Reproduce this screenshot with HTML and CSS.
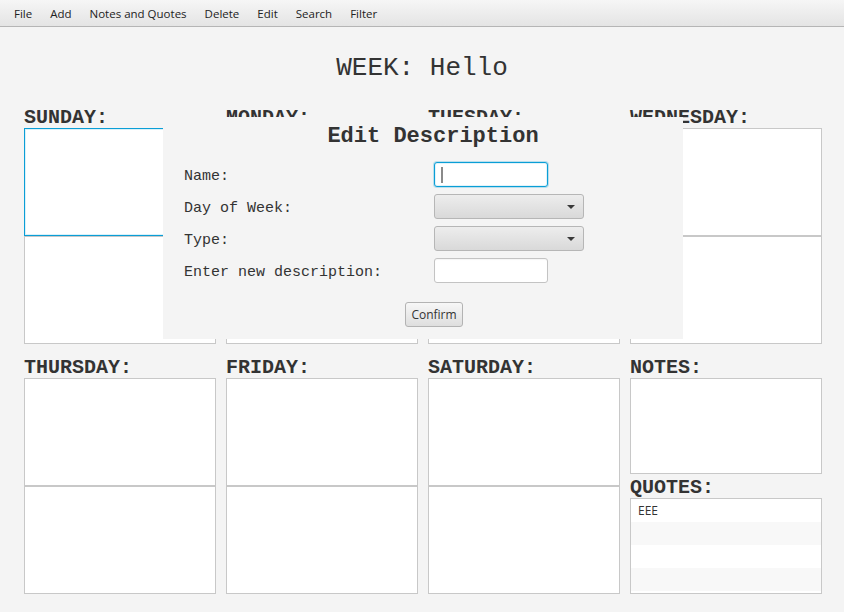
FILE: index.html
```html
<!DOCTYPE html>
<html>
<head>
<meta charset="utf-8">
<title>Week</title>
<link rel="stylesheet" href="styles.css">
</head>
<body>
<nav class="menubar">
  <span class="menu-item">File</span>
  <span class="menu-item">Add</span>
  <span class="menu-item">Notes and Quotes</span>
  <span class="menu-item">Delete</span>
  <span class="menu-item">Edit</span>
  <span class="menu-item">Search</span>
  <span class="menu-item">Filter</span>
</nav>
<h1 class="title">WEEK: Hello</h1>
<main class="week">
  <section class="day">
    <h2 class="day-label">SUNDAY:</h2>
    <div class="slot focused"></div>
    <div class="slot"></div>
  </section>
  <section class="day">
    <h2 class="day-label">MONDAY:</h2>
    <div class="slot"></div>
    <div class="slot"></div>
  </section>
  <section class="day">
    <h2 class="day-label">TUESDAY:</h2>
    <div class="slot"></div>
    <div class="slot"></div>
  </section>
  <section class="day">
    <h2 class="day-label">WEDNESDAY:</h2>
    <div class="slot"></div>
    <div class="slot"></div>
  </section>
  <section class="day">
    <h2 class="day-label">THURSDAY:</h2>
    <div class="slot"></div>
    <div class="slot"></div>
  </section>
  <section class="day">
    <h2 class="day-label">FRIDAY:</h2>
    <div class="slot"></div>
    <div class="slot"></div>
  </section>
  <section class="day">
    <h2 class="day-label">SATURDAY:</h2>
    <div class="slot"></div>
    <div class="slot"></div>
  </section>
  <section class="day">
    <h2 class="day-label">NOTES:</h2>
    <div class="notes-box"></div>
    <h2 class="day-label">QUOTES:</h2>
    <ul class="quotes">
      <li>EEE</li>
      <li></li>
      <li></li>
      <li></li>
    </ul>
  </section>
</main>

<div class="dialog">
  <h3 class="dialog-title">Edit Description</h3>
  <div class="form">
    <label class="form-label">Name:</label>
    <div class="field focused-field"><span class="caret"></span></div>
    <label class="form-label">Day of Week:</label>
    <div class="combo"><span class="arrow"></span></div>
    <label class="form-label">Type:</label>
    <div class="combo"><span class="arrow"></span></div>
    <label class="form-label">Enter new description:</label>
    <div class="field"></div>
  </div>
  <div class="actions">
    <button class="btn">Confirm</button>
  </div>
</div>
</body>
</html>
```

FILE: styles.css
```css
html, body {
  margin: 0;
  padding: 0;
}

body {
  width: 844px;
  height: 612px;
  position: relative;
  overflow: hidden;
  background: #f4f4f4;
  color: #333333;
  font-family: "Open Sans", "Noto Sans", sans-serif;
}

.menubar {
  height: 26px;
  border-bottom: 1px solid #b5b5b5;
  background: linear-gradient(#f6f6f6, #e4e4e4);
  display: flex;
  align-items: center;
  padding-left: 5px;
  font-size: 11.5px;
  color: #222;
}

.menu-item {
  padding: 0 9px;
}

.title {
  margin: 26px 0 21px;
  font: 400 26px/30px "Liberation Mono", monospace;
  text-align: center;
  color: #333;
}

.week {
  display: grid;
  grid-template-columns: repeat(4, 192px);
  column-gap: 10px;
  row-gap: 10px;
  padding-left: 24px;
}

.day {
  display: flex;
  flex-direction: column;
}

.day-label {
  margin: 0;
  height: 24px;
  font: 700 20px/27px "Liberation Mono", monospace;
  color: #333;
}

.slot {
  height: 106px;
  border: 1px solid #c8c8c8;
  background: #fff;
}

.slot.focused {
  border-color: #0a9ed6;
  box-shadow: inset 0 0 0 1px rgba(10, 158, 214, 0.15);
}

.notes-box {
  height: 94px;
  border: 1px solid #c8c8c8;
  background: #fff;
}

.quotes {
  list-style: none;
  margin: 0;
  padding: 0;
  height: 94px;
  border: 1px solid #c8c8c8;
  background: #fff;
  overflow: hidden;
}

.quotes li {
  height: 23px;
  line-height: 23px;
  padding-left: 7px;
  font-size: 12px;
  color: #333;
}

.quotes li:nth-child(even) {
  background: #f8f8f8;
}

/* dialog overlay */
.dialog {
  position: absolute;
  left: 163px;
  top: 117px;
  width: 520px;
  height: 222px;
  box-sizing: border-box;
  padding-top: 5px;
  background: #f4f4f4;
}

.dialog-title {
  margin: 0;
  padding-left: 20px;
  text-align: center;
  font: 700 22px/30px "Liberation Mono", monospace;
  color: #333;
}

.form {
  margin-top: 10px;
  padding-left: 21px;
  display: grid;
  grid-template-columns: 250px auto;
  grid-auto-rows: 25px;
  row-gap: 7px;
  align-items: center;
  justify-items: start;
}

.form-label {
  padding-top: 4px;
  font: 400 15px/25px "Liberation Mono", monospace;
  color: #333;
}

.field {
  width: 114px;
  height: 25px;
  box-sizing: border-box;
  border: 1px solid #c3c3c3;
  border-radius: 3px;
  background: #fff;
  box-shadow: inset 0 1px 1px rgba(0, 0, 0, 0.04);
  display: flex;
  align-items: center;
}

.focused-field {
  border-color: #0a9ed6;
  box-shadow: 0 0 0 1px rgba(10, 158, 214, 0.25), inset 0 0 0 1px rgba(10, 158, 214, 0.12);
}

.caret {
  width: 2px;
  height: 16px;
  margin-left: 6px;
  background: #8a8a8a;
}

.combo {
  width: 150px;
  height: 25px;
  box-sizing: border-box;
  border: 1px solid #b6b6b6;
  border-radius: 3px;
  background: linear-gradient(#ededed, #d9d9d9);
  display: flex;
  align-items: center;
  justify-content: flex-end;
  padding-right: 8px;
}

.arrow {
  width: 0;
  height: 0;
  border-left: 4px solid transparent;
  border-right: 4px solid transparent;
  border-top: 4px solid #3a3a3a;
}

.actions {
  display: flex;
  justify-content: center;
  padding-left: 22px;
  margin-top: 19px;
}

.btn {
  width: 58px;
  height: 25px;
  box-sizing: border-box;
  padding: 0;
  border: 1px solid #b3b3b3;
  border-radius: 3px;
  background: linear-gradient(#f7f7f7, #dedede);
  font: 400 12px "Open Sans", "Noto Sans", sans-serif;
  color: #333;
}
```
